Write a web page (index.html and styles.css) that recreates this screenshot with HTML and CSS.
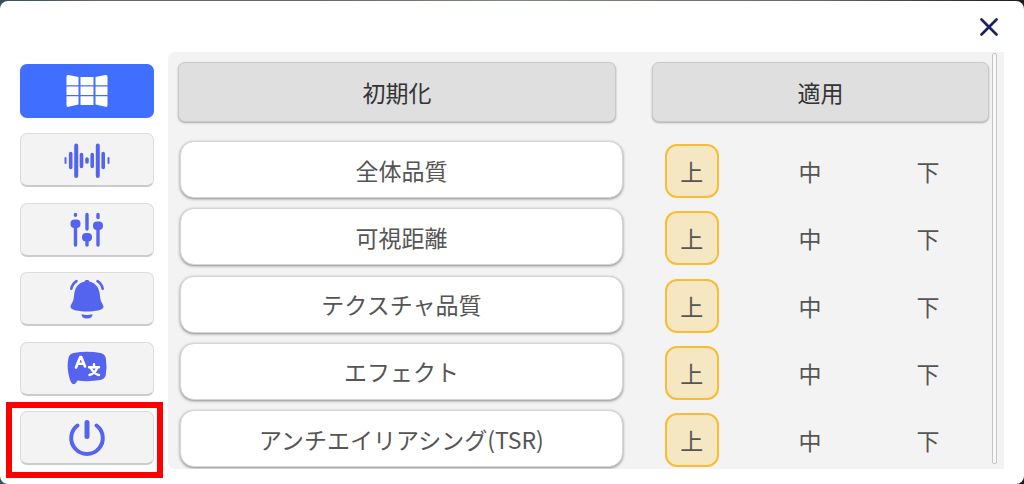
FILE: index.html
```html
<!DOCTYPE html>
<html lang="ja">
<head>
    <meta charset="UTF-8">
    <meta name="viewport" content="width=device-width, initial-scale=1.0">
    <title>設定</title>
    <link rel="stylesheet" href="styles.css">
</head>
<body>
    <main class="dialog">
        <header class="dialog-header">
            <button class="close" type="button" aria-label="閉じる">
                <svg width="20" height="20" viewBox="0 0 20 20"><path d="M2.500 2.500L17.500 17.500M17.500 2.500L2.500 17.500" fill="none" stroke="#1c2260" stroke-width="2.700" stroke-linecap="round"/></svg>
            </button>
        </header>

        <div class="dialog-body">
            <nav class="tabs">
                <button class="tab active" type="button" aria-label="画面">
                    <svg width="46" height="40" viewBox="0 0 46 40">
                        <g fill="#fff">
                            <path d="M4.500 4L14.500 6V14.300H2.500V6Q2.500 3.500 4.500 4ZM16.500 6H29.500V14.300H16.500ZM31.500 6L41.500 4Q43.500 3.500 43.500 6V14.300H31.500Z"/>
                            <path d="M2.500 15.500H14.500V24H2.500ZM16.500 15.500H29.500V24H16.500ZM31.500 15.500H43.500V24H31.500Z"/>
                            <path d="M2.500 25.200H14.500V33.500L4.500 35.800Q2.500 36.300 2.500 34ZM16.500 25.200H29.500V34H16.500ZM31.500 25.200H43.500V34Q43.500 36.300 41.500 35.800L31.500 33.500Z"/>
                        </g>
                    </svg>
                </button>
                <button class="tab" type="button" aria-label="サウンド">
                    <svg width="46" height="40" viewBox="0 0 46 40">
                        <g stroke="#5564ef" stroke-linecap="round" fill="none">
                            <path d="M1.500 18V23M44.500 18V23" stroke-width="2"/>
                            <path d="M6.700 13.500V27.500M17.500 14.500V26.500M23 19V22M28.200 14.500V26.500M39.200 13.500V27.500" stroke-width="3.600"/>
                            <path d="M12.200 5.500V36M33.800 5.500V36" stroke-width="4"/>
                        </g>
                    </svg>
                </button>
                <button class="tab" type="button" aria-label="操作">
                    <svg width="46" height="40" viewBox="0 0 46 40">
                        <path d="M11.500 5.500V6.300M11.500 15V36M23 5.500V20M23 29V36M34 5.500V8.500M34 17V36" stroke="#5564ef" stroke-width="3.400" stroke-linecap="round" fill="none"/>
                        <rect x="6.500" y="10.500" width="10" height="8.500" rx="4" fill="#5564ef"/>
                        <rect x="18" y="24" width="10" height="8.500" rx="4" fill="#5564ef"/>
                        <rect x="29" y="12.500" width="10" height="8.500" rx="4" fill="#5564ef"/>
                    </svg>
                </button>
                <button class="tab" type="button" aria-label="通知">
                    <svg width="46" height="42" viewBox="0 0 46 42">
                        <path d="M23 2C24.300 2 25 2.500 25.300 3.400C32 4.800 35.500 10 36 18C36.500 25 39.500 26 39.500 29C39.500 32 31 33.500 23 33.500S6.500 32 6.500 29C6.500 26 9.500 25 10 18C10.500 10 14 4.800 20.700 3.400C21 2.500 21.700 2 23 2Z" fill="#5564ef"/>
                        <path d="M17.500 36.300Q23 37.500 28.500 36.300Q28.500 40.500 23 40.500T17.500 36.300Z" fill="#5564ef"/>
                        <path d="M12.500 3.200Q8.500 5.500 7.300 10.800M33.500 3.200Q37.500 5.500 38.700 10.800" stroke="#5564ef" stroke-width="2.600" stroke-linecap="round" fill="none"/>
                    </svg>
                </button>
                <button class="tab" type="button" aria-label="言語">
                    <svg width="46" height="40" viewBox="0 0 46 40">
                        <path d="M9.500 5Q23 2.500 36.500 5Q41 6 41.800 10Q43.200 18.500 41.800 27Q41 31 36.500 32Q24 34 13.500 32.500L12 35Q10 37 8 35.500C6 33.500 5.500 30 4.500 26Q2.800 17.500 4.500 10Q5.200 6 9.500 5Z" fill="#5564ef"/>
                        <path d="M12 19.500L16.200 9H17.200L21 18.500M13.500 15.800H19.500" stroke="#fff" stroke-width="2.600" stroke-linecap="round" stroke-linejoin="round" fill="none"/>
                        <path d="M30 16.200V18.500M25 19.200H35M33.200 20Q31 25.500 25.500 27M27 20.500Q30 26 35 27" stroke="#fff" stroke-width="2.400" stroke-linecap="round" fill="none"/>
                    </svg>
                </button>
                <button class="tab marked" type="button" aria-label="終了">
                    <svg width="46" height="40" viewBox="0 0 46 40">
                        <path d="M13.500 8.500A15.800 15.800 0 1 0 32.500 8.500" stroke="#5564ef" stroke-width="4" stroke-linecap="round" fill="none"/>
                        <path d="M23 5.500V19.500" stroke="#5564ef" stroke-width="5" stroke-linecap="round"/>
                    </svg>
                </button>
            </nav>

            <form class="panel">
                <div class="content">
                    <div class="actions">
                        <button class="action" type="reset">初期化</button>
                        <button class="action" type="button">適用</button>
                    </div>

                    <div class="settings">
                        <div class="setting" role="radiogroup" aria-labelledby="quality">
                            <div class="setting-name" id="quality">全体品質</div>
                            <div class="levels">
                                <label class="level"><input type="radio" name="quality" checked><span>上</span></label>
                                <label class="level"><input type="radio" name="quality"><span>中</span></label>
                                <label class="level"><input type="radio" name="quality"><span>下</span></label>
                            </div>
                        </div>
                        <div class="setting" role="radiogroup" aria-labelledby="distance">
                            <div class="setting-name" id="distance">可視距離</div>
                            <div class="levels">
                                <label class="level"><input type="radio" name="distance" checked><span>上</span></label>
                                <label class="level"><input type="radio" name="distance"><span>中</span></label>
                                <label class="level"><input type="radio" name="distance"><span>下</span></label>
                            </div>
                        </div>
                        <div class="setting" role="radiogroup" aria-labelledby="texture">
                            <div class="setting-name" id="texture">テクスチャ品質</div>
                            <div class="levels">
                                <label class="level"><input type="radio" name="texture" checked><span>上</span></label>
                                <label class="level"><input type="radio" name="texture"><span>中</span></label>
                                <label class="level"><input type="radio" name="texture"><span>下</span></label>
                            </div>
                        </div>
                        <div class="setting" role="radiogroup" aria-labelledby="effect">
                            <div class="setting-name" id="effect">エフェクト</div>
                            <div class="levels">
                                <label class="level"><input type="radio" name="effect" checked><span>上</span></label>
                                <label class="level"><input type="radio" name="effect"><span>中</span></label>
                                <label class="level"><input type="radio" name="effect"><span>下</span></label>
                            </div>
                        </div>
                        <div class="setting" role="radiogroup" aria-labelledby="tsr">
                            <div class="setting-name" id="tsr">アンチエイリアシング(TSR)</div>
                            <div class="levels">
                                <label class="level"><input type="radio" name="tsr" checked><span>上</span></label>
                                <label class="level"><input type="radio" name="tsr"><span>中</span></label>
                                <label class="level"><input type="radio" name="tsr"><span>下</span></label>
                            </div>
                        </div>
                    </div>
                </div>
                <div class="scrollbar"></div>
            </form>
        </div>
    </main>
</body>
</html>
```

FILE: styles.css
```css
* {
    margin: 0;
    padding: 0;
    box-sizing: border-box;
    font-family: "Noto Sans CJK JP", sans-serif;
}

body {
    background: linear-gradient(90deg, #36505c, #67666a 10%, #67666a 30%, #7b8791 50%, #67666a 80%, #1c1c1e);
    padding-top: 1px;
    min-height: 100vh;
    display: flex;
}

/* Dialog */
.dialog {
    flex: 1;
    background: #fff;
    border-radius: 8px;
    padding-bottom: 15px;
    display: flex;
    flex-direction: column;
}

.dialog-header {
    height: 51px;
    padding-right: 25px;
    display: flex;
    align-items: center;
    justify-content: flex-end;
}

.close {
    background: none;
    border: none;
    width: 20px;
    height: 20px;
    cursor: pointer;
}

.close svg {
    display: block;
}

.dialog-body {
    flex: 1;
    display: flex;
    gap: 14px;
    padding: 0 20px;
}

/* Tabs */
.tabs {
    width: 134px;
    padding: 12px 0 4px;
    display: flex;
    flex-direction: column;
    justify-content: space-between;
}

.tab {
    height: 54px;
    background: #f3f3f3;
    border: 1px solid #dcdcdc;
    border-bottom: 2px solid #cbcbcb;
    border-radius: 7px;
    display: flex;
    align-items: center;
    justify-content: center;
    position: relative;
    cursor: pointer;
}

.tab.active {
    background: #406eff;
    border-color: #406eff;
}

/* red frame round the exit tab */
.tab.marked::after {
    content: '';
    position: absolute;
    top: -10px;
    right: -10px;
    bottom: -15px;
    left: -15px;
    border: 6px solid #fe0000;
    pointer-events: none;
}

/* Settings panel */
.panel {
    flex: 1;
    background: #f3f3f3;
    border-radius: 7px 0 0 7px;
    overflow: hidden;
    display: flex;
}

.content {
    flex: 1;
    padding: 10px 3px 0 10px;
    display: flex;
    flex-direction: column;
    gap: 19px;
}

.actions {
    display: grid;
    grid-template-columns: 13fr 10fr;
    gap: 36px;
}

.action {
    height: 60px;
    background: #dfdfdf;
    border: 1px solid #c9c9c9;
    border-radius: 7px;
    box-shadow: 0 1px 2px #aaa;
    font-size: 23px;
    color: #333;
    cursor: pointer;
}

.settings {
    flex: 1;
    padding: 0 2px 2px;
    display: flex;
    flex-direction: column;
    justify-content: space-between;
}

.setting {
    display: grid;
    grid-template-columns: 5fr 4fr;
    gap: 10px;
    align-items: end;
}

.setting-name {
    height: 57px;
    background: #fff;
    border: 1px solid #d5d5d5;
    border-radius: 14px;
    box-shadow: 0 1px 3px #888;
    display: flex;
    align-items: center;
    justify-content: center;
    font-size: 23px;
    color: #555;
}

.levels {
    display: grid;
    grid-template-columns: repeat(3, 1fr);
    justify-items: center;
}

.level {
    position: relative;
    cursor: pointer;
}

.level input {
    position: absolute;
    opacity: 0;
}

.level span {
    width: 54px;
    height: 54px;
    border: 2px solid transparent;
    border-radius: 12px;
    display: flex;
    align-items: center;
    justify-content: center;
    font-size: 23px;
    color: #555;
}

.level input:checked + span {
    background: #f6e7c3;
    border-color: #fabc37;
}

.scrollbar {
    width: 5px;
    margin: 1px 7px 5px 0;
    background: #f8f8f8;
    border: 1px solid #c6c6c6;
    border-radius: 2px;
}
```
